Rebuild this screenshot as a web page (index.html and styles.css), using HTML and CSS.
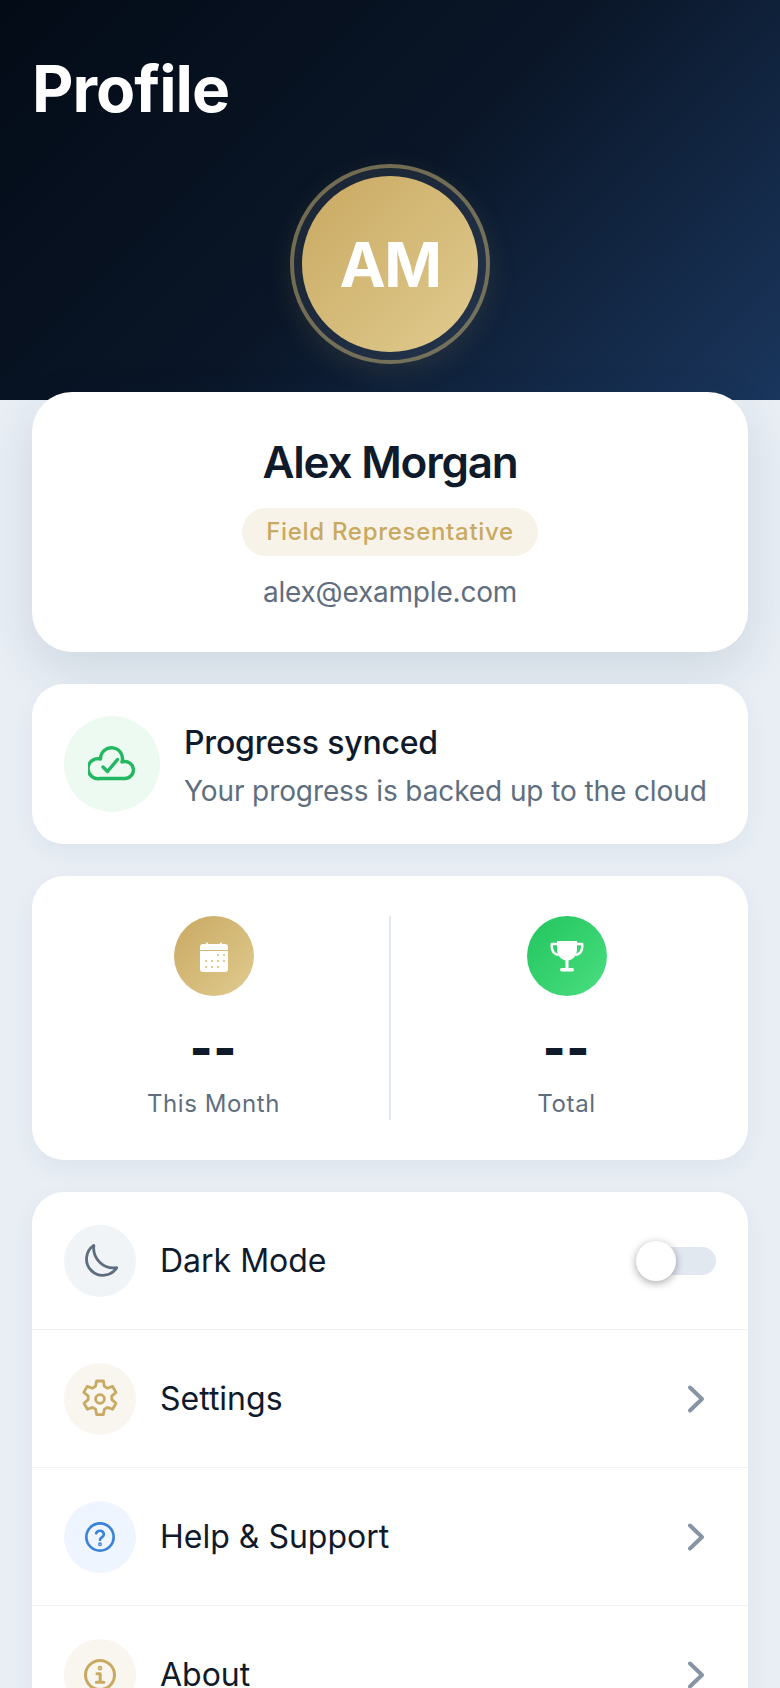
FILE: index.html
```html
<!DOCTYPE html>
<html lang="en">
<head>
<meta charset="utf-8">
<title>Profile</title>
<link rel="stylesheet" href="styles.css">
</head>
<body>
<div class="page">
  <header class="hero">
    <h1 class="hero-title">Profile</h1>
    <div class="avatar-wrap">
      <div class="avatar">AM</div>
    </div>
  </header>
  <main class="content">
    <section class="card identity">
      <h2 class="name">Alex Morgan</h2>
      <span class="role">Field Representative</span>
      <p class="email">alex@example.com</p>
    </section>
    <section class="card sync">
      <div class="sync-icon">
        <svg width="48" height="48" viewBox="0 0 48 48" fill="none" stroke="#22b760" stroke-width="3.400" stroke-linecap="round" stroke-linejoin="round"><path d="M12 38.500H37A8.500 8.500 0 1 0 34 22A11 11 0 1 0 12.500 19A10 10 0 1 0 12 38.500z"/><path d="M15 27l4.500 4.500 10-12"/></svg>
      </div>
      <div class="sync-text">
        <div class="sync-title">Progress synced</div>
        <div class="sync-sub">Your progress is backed up to the cloud</div>
      </div>
    </section>
    <section class="card stats">
      <div class="stat">
        <div class="stat-icon gold">
          <svg width="40" height="40" viewBox="0 0 40 40"><path fill="#fff" d="M6 11a3 3 0 0 1 3-3h2.600l1.400-2 1.400 2h11.200l1.400-2 1.400 2H31a3 3 0 0 1 3 3v3H6z"/><path fill="#fff" d="M6 15h28v18a3 3 0 0 1-3 3H9a3 3 0 0 1-3-3z"/><g fill="#d4b876"><circle cx="24" cy="19" r="1"/><circle cx="30" cy="19" r="1"/><circle cx="12" cy="25" r="1"/><circle cx="18" cy="25" r="1"/><circle cx="24" cy="25" r="1"/><circle cx="30" cy="25" r="1"/><circle cx="12" cy="31" r="1"/><circle cx="18" cy="31" r="1"/><circle cx="24" cy="31" r="1"/></g></svg>
        </div>
        <div class="stat-value">--</div>
        <div class="stat-label">This Month</div>
      </div>
      <div class="stat-divider"></div>
      <div class="stat">
        <div class="stat-icon green">
          <svg width="40" height="40" viewBox="0 0 40 40"><path fill="#fff" d="M10 5H30V13C30 20 26 24 20 24.500C14 24 10 20 10 13z"/><rect fill="#fff" x="18.500" y="24" width="3" height="9"/><rect fill="#fff" x="13" y="32" width="14" height="3.500" rx="1.700"/><path fill="none" stroke="#fff" stroke-width="2.500" stroke-linejoin="round" d="M10 8H4.800V11C4.800 15 7 18 11.500 19M30 8H35.200V11C35.200 15 33 18 28.500 19"/></svg>
        </div>
        <div class="stat-value">--</div>
        <div class="stat-label">Total</div>
      </div>
    </section>
    <section class="card menu">
      <div class="row">
        <div class="row-icon slate">
          <svg width="40" height="40" viewBox="0 0 24 24" fill="none" stroke="#5f6e7e" stroke-width="1.700" stroke-linecap="round" stroke-linejoin="round"><path d="M8.300 2.600A9.800 9.800 0 1 0 22 16A12 12 0 0 1 8.300 2.600z"/></svg>
        </div>
        <span class="row-label">Dark Mode</span>
        <div class="toggle"><div class="knob"></div></div>
      </div>
      <div class="row">
        <div class="row-icon cream">
          <svg width="40" height="40" viewBox="2 2 20 20" fill="none" stroke="#c9a962" stroke-width="1.400" stroke-linecap="round" stroke-linejoin="round"><circle cx="12" cy="12" r="2.200"/><path d="M10.300 3h3.400l.5 2.700 1.500.9 2.600-.9 1.700 3-2.100 1.800v1.800l2.100 1.800-1.700 3-2.600-.9-1.500.9-.5 2.700h-3.400l-.5-2.700-1.500-.9-2.600.9-1.700-3 2.100-1.800v-1.800L3.900 8.700l1.700-3 2.600.9 1.500-.9z"/></svg>
        </div>
        <span class="row-label">Settings</span>
        <svg class="chev" width="32" height="32" viewBox="0 0 32 32" fill="none" stroke="#8695a6" stroke-width="4" stroke-linecap="round" stroke-linejoin="round"><path d="M6 4.500l12 11.500L6 27.500"/></svg>
      </div>
      <div class="row">
        <div class="row-icon sky">
          <svg width="40" height="40" viewBox="0 0 24 24" fill="none" stroke="#3b82d9" stroke-width="1.600" stroke-linecap="round" stroke-linejoin="round"><circle cx="12" cy="12" r="8.200"/><path d="M9.700 9.700a2.400 2.400 0 0 1 4.600.8c0 1.500-2.300 1.900-2.300 3.200"/><circle cx="12" cy="16.400" r=".4"/></svg>
        </div>
        <span class="row-label">Help &amp; Support</span>
        <svg class="chev" width="32" height="32" viewBox="0 0 32 32" fill="none" stroke="#8695a6" stroke-width="4" stroke-linecap="round" stroke-linejoin="round"><path d="M6 4.500l12 11.500L6 27.500"/></svg>
      </div>
      <div class="row">
        <div class="row-icon cream">
          <svg width="40" height="40" viewBox="0 0 24 24" fill="none" stroke="#c9a962" stroke-width="1.800" stroke-linecap="round" stroke-linejoin="round"><circle cx="12" cy="12" r="8.700"/><path d="M10.200 11.300h1.900v5M9.800 16.400h4.500"/><circle cx="12" cy="7.900" r=".5"/></svg>
        </div>
        <span class="row-label">About</span>
        <svg class="chev" width="32" height="32" viewBox="0 0 32 32" fill="none" stroke="#8695a6" stroke-width="4" stroke-linecap="round" stroke-linejoin="round"><path d="M6 4.500l12 11.500L6 27.500"/></svg>
      </div>
    </section>
  </main>
</div>
</body>
</html>
```
FILE: styles.css
```css
* { box-sizing: border-box; }
html, body { margin: 0; padding: 0; }
body {
  font-family: Inter, "Liberation Sans", sans-serif;
  background: #e8eef4;
  color: #0f1a2b;
  height: 1688px;
  overflow: hidden;
}
.page { display: flex; flex-direction: column; }
.hero {
  height: 400px;
  padding: 51px 32px 0;
  background: linear-gradient(135deg, #030b16 0%, #0a1628 50%, #1a365d 100%);
  display: flex;
  flex-direction: column;
}
.hero-title {
  margin: 0;
  font-size: 64px;
  line-height: 76px;
  font-weight: 700;
  color: #fff;
  letter-spacing: -1px;
}
.avatar-wrap {
  margin: 49px auto 0;
  width: 176px;
  height: 176px;
  position: relative;
}
.avatar-wrap::before {
  content: "";
  position: absolute;
  inset: -12px;
  border: 4px solid rgba(201, 180, 120, 0.55);
  background: rgba(255, 255, 255, 0.08);
  background-clip: padding-box;
  border-radius: 50%;
  box-shadow: 0 8px 28px rgba(201, 169, 98, 0.12);
}
.avatar {
  position: relative;
  width: 176px;
  height: 176px;
  border-radius: 50%;
  background: linear-gradient(135deg, #c9a962, #e0cb8f);
  color: #fff;
  font-size: 62px;
  font-weight: 700;
  letter-spacing: -1.500px;
  display: flex;
  align-items: center;
  justify-content: center;
}
.content {
  padding: 0 32px;
  margin-top: -8px;
  display: flex;
  flex-direction: column;
  gap: 32px;
  position: relative;
}
.card {
  background: #fff;
  border-radius: 32px;
}
.identity {
  height: 260px;
  border-radius: 40px;
  padding-top: 42px;
  display: flex;
  flex-direction: column;
  align-items: center;
  box-shadow: 0 16px 48px rgba(15, 50, 90, 0.12);
}
.name {
  margin: 0;
  font-size: 44px;
  line-height: 56px;
  font-weight: 600;
  letter-spacing: -1.200px;
}
.role {
  margin-top: 18px;
  height: 48px;
  padding: 0 24px;
  border-radius: 24px;
  background: #f8f3e8;
  color: #c9a962;
  font-size: 24px;
  font-weight: 500;
  letter-spacing: 0.700px;
  line-height: 48px;
}
.email {
  margin: 18px 0 0;
  font-size: 28px;
  line-height: 36px;
  color: #5f6e7e;
  letter-spacing: -0.200px;
}
.sync {
  height: 160px;
  padding: 0 32px;
  display: flex;
  align-items: center;
  gap: 24px;
  box-shadow: 0 8px 24px rgba(15, 50, 90, 0.05);
}
.sync-icon {
  width: 96px;
  height: 96px;
  border-radius: 50%;
  background: #edfaf2;
  display: flex;
  align-items: center;
  justify-content: center;
  flex: none;
}
.sync-text { padding-top: 4px; }
.sync-title { font-size: 32px; line-height: 40px; font-weight: 500; letter-spacing: -0.200px; }
.sync-sub { font-size: 28px; line-height: 36px; color: #5f6e7e; margin-top: 10px; letter-spacing: -0.100px; white-space: nowrap; }
.stats {
  height: 284px;
  padding: 40px 6px;
  display: flex;
  box-shadow: 0 8px 24px rgba(15, 50, 90, 0.05);
}
.stat {
  flex: 1;
  display: flex;
  flex-direction: column;
  align-items: center;
}
.stat-divider { width: 2px; background: #e2e9ef; }
.stat-icon {
  width: 80px;
  height: 80px;
  border-radius: 50%;
  display: flex;
  align-items: center;
  justify-content: center;
}
.gold { background: linear-gradient(135deg, #c9a962, #e0cb8f); }
.green { background: linear-gradient(135deg, #22c55e, #4ade80); }
.stat-value {
  margin-top: 24px;
  font-size: 48px;
  line-height: 56px;
  font-weight: 900;
  letter-spacing: 1px;
}
.stat-label {
  margin-top: 12px;
  font-size: 24px;
  line-height: 32px;
  color: #5f6e7e;
  letter-spacing: 0.600px;
}
.menu {
  box-shadow: 0 8px 24px rgba(15, 50, 90, 0.05);
}
.row {
  height: 138px;
  padding: 0 32px;
  display: flex;
  align-items: center;
  gap: 24px;
  border-bottom: 1px solid #f0f3f6;
}
.row-icon {
  width: 72px;
  height: 72px;
  border-radius: 50%;
  display: flex;
  align-items: center;
  justify-content: center;
  flex: none;
}
.slate { background: #f1f4f7; }
.cream { background: #f9f6ef; }
.sky { background: #eff5fe; }
.row-label { flex: 1; font-size: 32px; line-height: 40px; }
.chev { flex: none; }
.toggle {
  width: 80px;
  height: 28px;
  border-radius: 14px;
  background: #e2e8f0;
  position: relative;
  flex: none;
}
.knob {
  position: absolute;
  left: 0;
  top: -6px;
  width: 40px;
  height: 40px;
  border-radius: 50%;
  background: #fff;
  box-shadow: 0 2px 8px rgba(0, 0, 0, 0.35);
}
```
